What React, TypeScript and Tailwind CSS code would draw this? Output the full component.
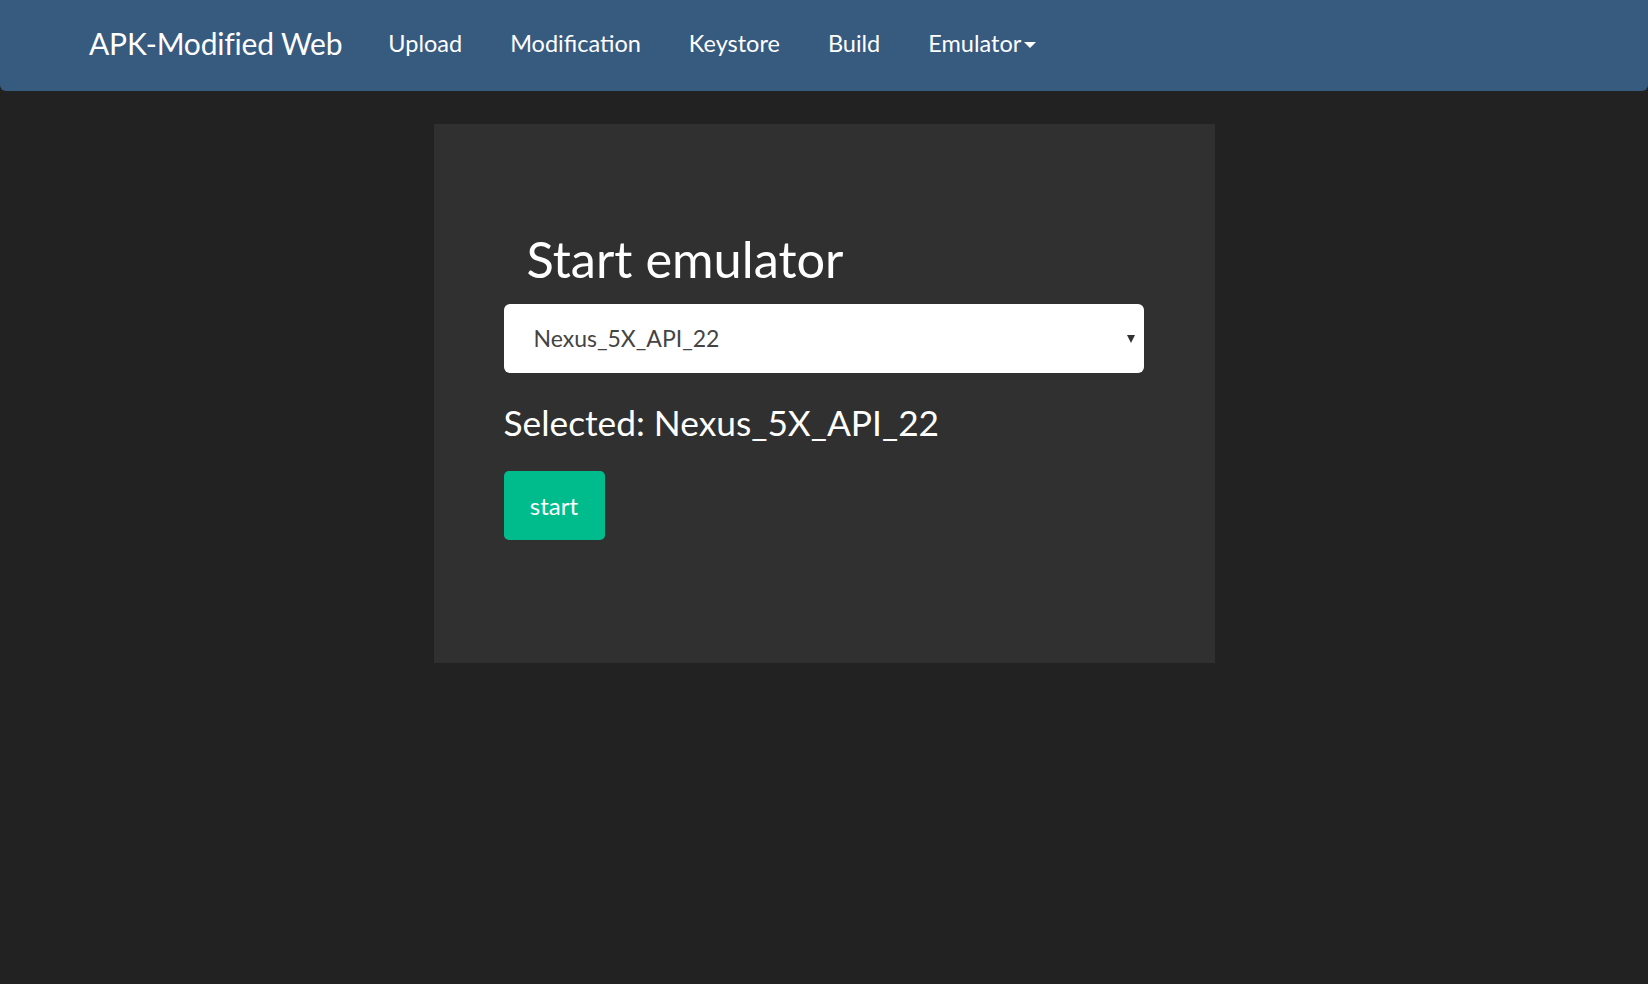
import React, { useState } from 'react';

const devices = ['Nexus_5X_API_22', 'Pixel_2_API_28', 'Nexus_6_API_25'];

function Navbar() {
  const links = ['Upload', 'Modification', 'Keystore', 'Build'];
  return (
    <nav className="h-[91px] bg-[#375a7f] rounded-b-[6px] flex items-center pl-[89px]">
      <span className="text-white text-[30px] tracking-[-0.2px] mr-[46px] -mt-[5px]">APK-Modified Web</span>
      <ul className="flex items-center gap-[48px] text-[23.5px] text-white -mt-[3px]">
        {links.map(l => (
          <li key={l}>{l}</li>
        ))}
        <li className="flex items-center">
          Emulator
          <span className="ml-[3px] mt-[2px] w-0 h-0 border-l-[6px] border-r-[6px] border-t-[6px] border-l-transparent border-r-transparent border-t-white" />
        </li>
      </ul>
    </nav>
  );
}

export default function App() {
  const [selected, setSelected] = useState(devices[0]);

  return (
    <div className="min-h-[984px] bg-[#222222] font-['Lato',sans-serif]">
      <Navbar />
      <div className="flex justify-center pt-[33px]">
        <div className="w-[781px] h-[539px] bg-[#303030] pl-[70px] pr-[70px] pt-[107px]">
          <h1 className="text-white text-[50.5px] leading-[1.1] pl-[23px] mb-[17px]">Start emulator</h1>
          <div className="relative">
            <select
              value={selected}
              onChange={e => setSelected(e.target.value)}
              className="w-[640px] h-[69px] appearance-none bg-white rounded-[6px] pl-[30px] text-[23px] text-[#444444] outline-none"
            >
              {devices.map(d => (
                <option key={d} value={d}>{d}</option>
              ))}
            </select>
            <span className="absolute left-[623px] top-[31px] w-0 h-0 border-l-[4px] border-r-[4px] border-t-[8px] border-l-transparent border-r-transparent border-t-[#333333] pointer-events-none" />
          </div>
          <h3 className="text-white text-[35.3px] leading-[1.1] mt-[31px] mb-[29px]">Selected: {selected}</h3>
          <button className="w-[101px] h-[69px] bg-[#00bc8c] rounded-[5px] text-white text-[24px]">start</button>
        </div>
      </div>
    </div>
  );
}
